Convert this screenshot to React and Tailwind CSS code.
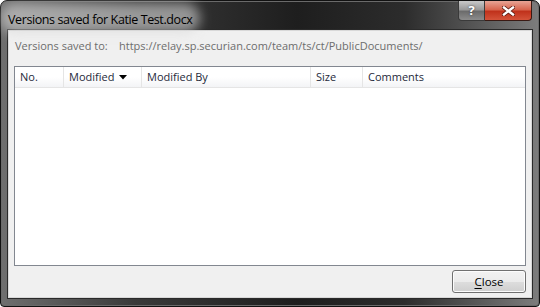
import React from "react";

const cols = [
    { label: "No.", w: "w-[49px]" },
    { label: "Modified", w: "w-[78px]", sort: true },
    { label: "Modified By", w: "w-[169px]" },
    { label: "Size", w: "w-[52px]" },
    { label: "Comments", w: "flex-1", last: true },
];

const App = () => {
    return (
        <div className="w-[540px] h-[307px] bg-white font-['Open_Sans','Noto_Sans',sans-serif]">
            <div className="w-full h-full rounded-t-[7px] rounded-b-[4px] border border-[#111] bg-[linear-gradient(90deg,#6f6f6f_0%,#3a3a3a_25%,#1e1e1e_55%,#2c2c2c_75%,#7d7d7d_100%)] flex flex-col shadow-[inset_0_0_0_1px_#6a6a6a]">
                {/* title bar */}
                <div className="h-[28px] flex items-start justify-between pl-[7px] pr-[7px]">
                    <div className="relative mt-[5px]">
                        <div className="absolute -inset-x-[8px] -inset-y-[3px] rounded-full bg-[#d8d8d8] opacity-60 blur-[6px]" />
                        <span className="relative text-[12.5px] leading-[18px] text-black tracking-[-0.4px]">
                            Versions saved for Katie Test.docx
                        </span>
                    </div>
                    <div className="flex">
                        <div className="w-[27px] h-[20px] rounded-bl-[4px] border border-t-0 border-[#3a3a3a] bg-[linear-gradient(180deg,#c9c9c9_0%,#9a9a9a_45%,#6c6c6c_55%,#8c8c8c_100%)] flex items-center justify-center text-white text-[13px] font-bold leading-none [text-shadow:0_0_2px_#333]">
                            ?
                        </div>
                        <div className="w-[47px] h-[20px] rounded-br-[4px] border border-t-0 border-l-0 border-[#3a1a14] bg-[linear-gradient(180deg,#e7a495_0%,#d7664f_45%,#c0321c_55%,#d4533a_100%)] flex items-center justify-center">
                            <svg width="13" height="10" viewBox="0 0 13 10">
                                <path d="M2 1.5 L11 8.5 M11 1.5 L2 8.5" stroke="#5a1a10" strokeWidth="4" strokeLinecap="square" />
                                <path d="M2 1.5 L11 8.5 M11 1.5 L2 8.5" stroke="#ffffff" strokeWidth="2.4" strokeLinecap="square" />
                            </svg>
                        </div>
                    </div>
                </div>

                {/* client area */}
                <div className="flex-1 mx-[6px] mb-[7px] border border-[#2a2a2a] bg-[#f0f0f0] shadow-[inset_0_0_0_1px_#d8d8d8] flex flex-col px-[6px]">
                    <div className="flex items-center h-[30px] mt-[1px] text-[11px] text-[#6d6d6d]">
                        <span className="w-[105px] shrink-0 pl-[1px]">Versions saved to:</span>
                        <span>https://relay.sp.securian.com/team/ts/ct/PublicDocuments/</span>
                    </div>

                    <div className="mt-[5px] h-[200px] border border-[#828790] bg-white flex flex-col">
                        <div className="flex h-[21px] border-b border-[#e5e5e5] bg-[linear-gradient(180deg,#ffffff_0%,#ffffff_50%,#f3f4f6_100%)] text-[11px] text-[#1e2a3a]">
                            {cols.map((c) => (
                                <div
                                    key={c.label}
                                    className={`${c.w} flex items-center pl-[5px] pt-[1px] ${c.last ? "" : "border-r border-[#e5e5e5]"}`}
                                >
                                    <span>{c.label}</span>
                                    {c.sort && (
                                        <svg className="ml-[5px]" width="8" height="5" viewBox="0 0 8 5">
                                            <path d="M0 0 L8 0 L4 4.5 Z" fill="#000" />
                                        </svg>
                                    )}
                                </div>
                            ))}
                        </div>
                    </div>

                    <div className="flex justify-end mt-[4px]">
                        <button className="w-[74px] h-[23px] rounded-[3px] border border-[#707070] bg-[linear-gradient(180deg,#f2f2f2_0%,#ebebeb_50%,#dddddd_51%,#cfcfcf_100%)] text-[11.5px] text-black shadow-[inset_0_0_0_1px_#fcfcfc]">
                            <span className="underline underline-offset-2">C</span>lose
                        </button>
                    </div>
                </div>
            </div>
        </div>
    );
};

export default App;
